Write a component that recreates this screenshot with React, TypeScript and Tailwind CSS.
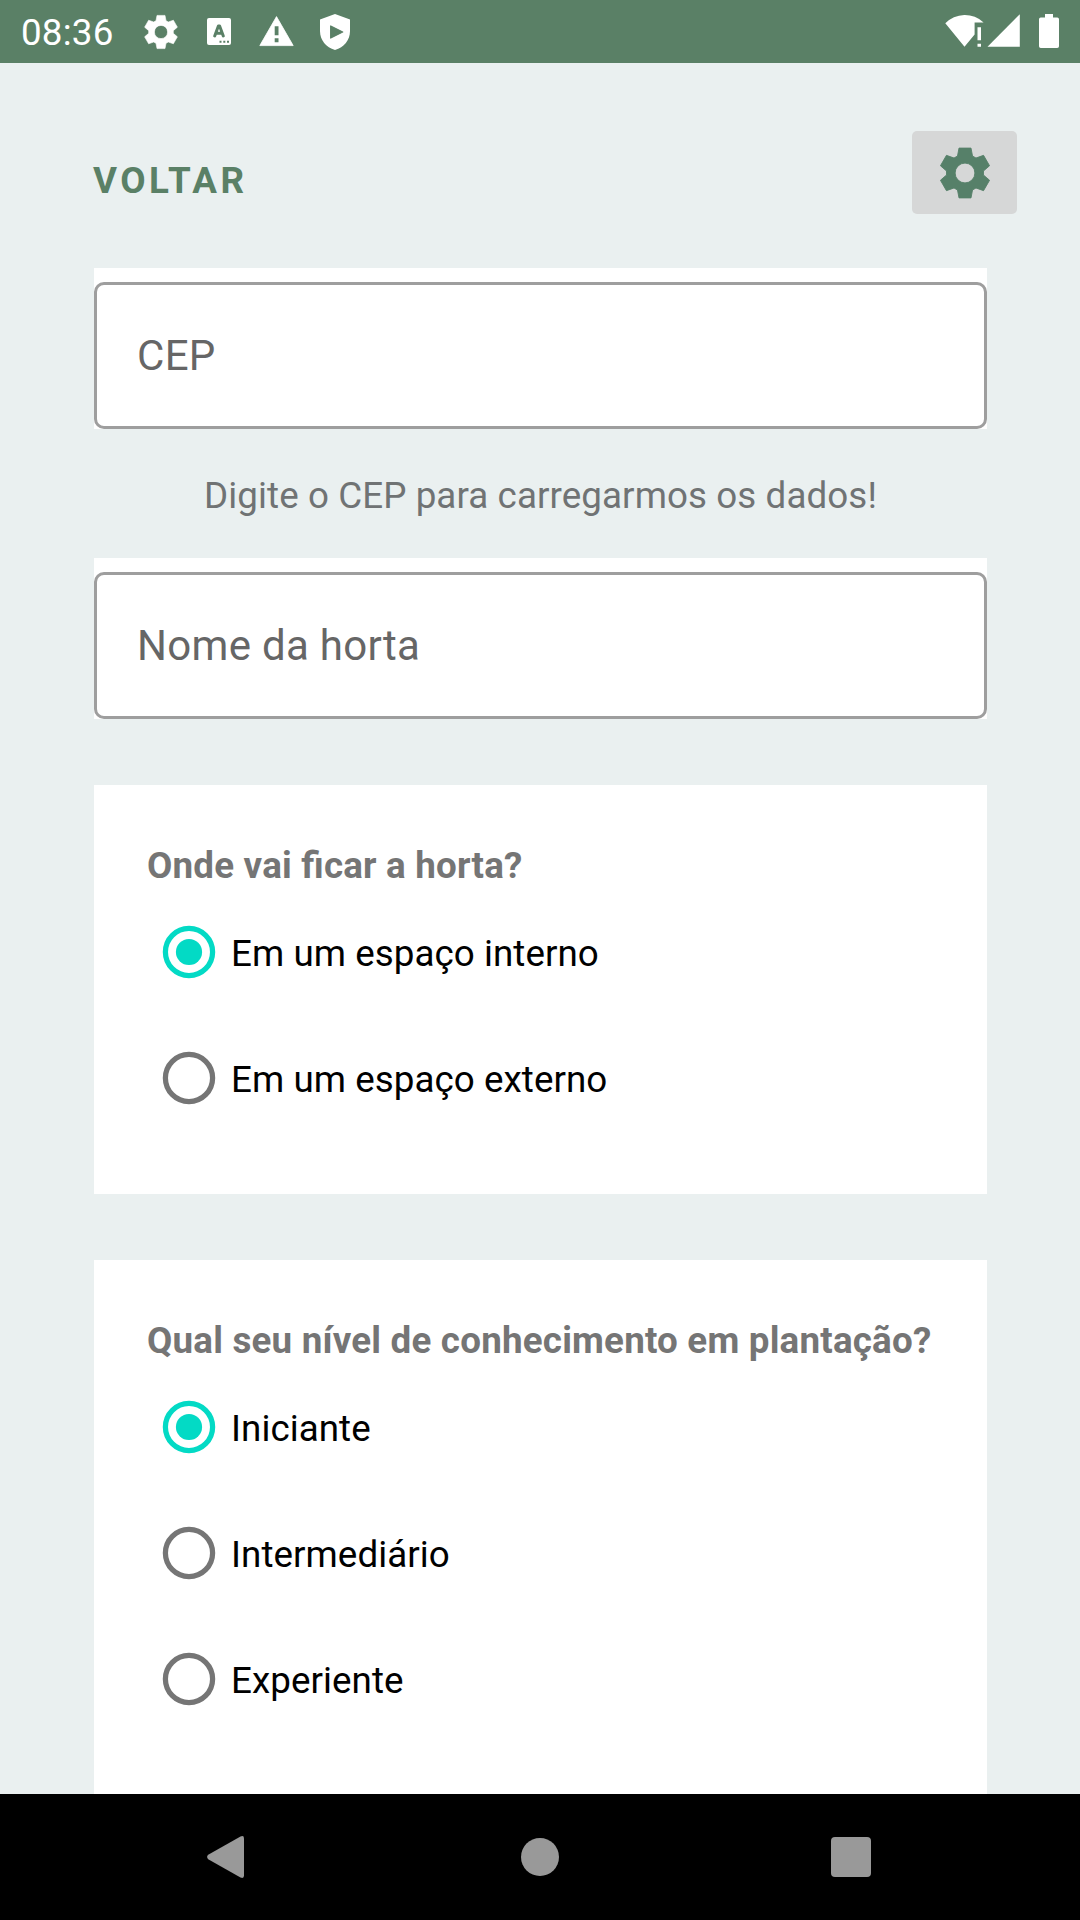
// One tooth of the six-toothed gear, centred on the origin and pointing up.
const TOOTH: [number, number][] = [
  [-7.5, -17],
  [-6, -24.9],
  [6, -24.9],
  [7.5, -17],
];

const GEAR_OUTLINE = [0, 1, 2, 3, 4, 5]
  .flatMap((k) =>
    TOOTH.map(([x, y]) => {
      const a = (k * Math.PI) / 3;
      const px = x * Math.cos(a) - y * Math.sin(a);
      const py = x * Math.sin(a) + y * Math.cos(a);
      return `${px.toFixed(2)} ${py.toFixed(2)}`;
    }),
  )
  .join("L");

const GEAR = `M${GEAR_OUTLINE}zM-9.9 0a9.9 9.9 0 1 0 19.8 0a9.9 9.9 0 1 0-19.8 0z`;

function Gear({ className }: { className: string }) {
  return (
    <svg
      className={className}
      viewBox="-30 -30 60 60"
      fill="currentColor"
      fillRule="evenodd"
      stroke="currentColor"
      strokeWidth="0.9"
      strokeLinejoin="round"
    >
      <path d={GEAR} />
    </svg>
  );
}

function StatusBar() {
  return (
    <header className="flex h-[63px] shrink-0 items-center bg-[#5a8066] pl-[21px] pr-[21px] text-white">
      <span className="w-[120px] pt-[2px] text-[36.75px] leading-[43px] tracking-[0.2px]">08:36</span>
      <Gear className="h-10 w-10 shrink-0" />
      <svg className="ml-[26px] h-[27px] w-6 shrink-0" viewBox="0 0 24 27">
        <rect width="24" height="27" rx="2" fill="currentColor" />
        <path d="M7.700 17.900 11.400 7.900h1.200l3.700 10M9 15.300h6" fill="none" stroke="#5a8066" strokeWidth="3" strokeLinecap="round" strokeLinejoin="round" />
        <path d="M12.500 22.800h2v2h-2zM16.300 22.800h2v2h-2zM20 22.800h2v2h-2z" fill="#5a8066" />
      </svg>
      <svg className="ml-7 h-[31px] w-[35px] shrink-0" viewBox="0 0 35 31">
        <path d="M17.500.6 34.200 29.600H.8z" fill="currentColor" stroke="currentColor" strokeWidth="0.8" strokeLinejoin="round" />
        <path d="M15.700 10.300h3.800v9h-3.800zM15.700 22.300h3.800v4h-3.800z" fill="#5a8066" />
      </svg>
      <svg className="ml-[26px] h-9 w-[30px] shrink-0" viewBox="0 0 30 36">
        <path d="M15 0 30 5.500V17c0 9-6 16.500-15 19C6 33.500 0 26 0 17V5.500z" fill="currentColor" />
        <path d="M10.700 12v12l12-6z" fill="#5a8066" stroke="#5a8066" strokeWidth="1.300" strokeLinejoin="round" />
      </svg>
      <div className="ml-auto flex items-center">
        <svg className="h-[35px] w-[39px]" viewBox="0 0 39 35" fill="currentColor">
          <path d="M.3 9.300A27 27 0 0 1 38.600 8.500H29.600V20.500L19.500 32.700z" />
          <path d="M32.500 13.300h3.500v13h-3.500zM32.500 29.700h3.500v3h-3.500z" />
        </svg>
        <svg className="ml-[3px] h-[35px] w-[33px]" viewBox="0 0 33 35" fill="currentColor">
          <path d="M32.800.3v32.400H.5z" />
        </svg>
        <svg className="ml-[19px] h-[35px] w-5" viewBox="0 0 20 35" fill="currentColor">
          <path d="M6 0h8v3.500h4.200q1.800 0 1.800 1.800v26.900q0 1.800-1.800 1.800H1.800Q0 34 0 32.200V5.300q0-1.800 1.800-1.800H6z" />
        </svg>
      </div>
    </header>
  );
}

function TextField({ label }: { label: string }) {
  return (
    <div className="h-[161px] bg-white pt-[14px]">
      <div className="flex h-[147px] items-center rounded-[10px] border-[3px] border-[#9e9e9e] pl-10">
        <span className="text-[42px] leading-[49px] tracking-[0.3px] text-[#666666]">{label}</span>
      </div>
    </div>
  );
}

function Radio({ label, checked = false }: { label: string; checked?: boolean }) {
  return (
    <div className="flex h-[126px] items-center pl-[15px]">
      <svg
        className={checked ? "h-[54px] w-[54px] text-[#03dac5]" : "h-[54px] w-[54px] text-[#757575]"}
        viewBox="0 0 54 54"
      >
        <circle cx="27" cy="27" r="23.6" fill="none" stroke="currentColor" strokeWidth="5.25" />
        {checked && <circle cx="27" cy="27" r="13.1" fill="currentColor" />}
      </svg>
      <span className="ml-[15px] pt-[2px] text-[36.75px] leading-[43px] tracking-[0.06px] text-black">{label}</span>
    </div>
  );
}

function Question({ title, options, className }: { title: string; options: string[]; className: string }) {
  return (
    <section className={className}>
      <h2 className="mb-[2px] h-[43px] text-[36.75px] font-bold leading-[43px] tracking-[0.2px] whitespace-nowrap text-[#757575] [font-feature-settings:'liga'_1]">
        {title}
      </h2>
      {options.map((option, i) => (
        <Radio key={option} label={option} checked={i === 0} />
      ))}
    </section>
  );
}

export default function App() {
  return (
    <div className="flex h-[1920px] w-[1080px] flex-col overflow-hidden bg-[#eaf0f0] font-[Roboto,sans-serif]">
      <StatusBar />
      <main className="flex min-h-0 flex-1 flex-col overflow-hidden pl-[94px] pr-[93px]">
        <div className="-mr-[30px] flex h-[205px] shrink-0 items-start justify-between pt-[68px]">
          <button className="-ml-px mt-7 text-[36.75px] font-bold leading-[43px] tracking-[3.4px] text-[#5a8066]">
            VOLTAR
          </button>
          <button className="flex h-[83px] w-[105px] items-center justify-center rounded-[5px] bg-[#d6d7d7] text-[#568069]">
            <Gear className="h-[60px] w-[60px]" />
          </button>
        </div>
        <TextField label="CEP" />
        <p className="flex h-[129px] shrink-0 items-center justify-center pt-[3px] text-[36.75px] leading-[43px] tracking-[0.09px] text-[#707374]">
          Digite o CEP para carregarmos os dados!
        </p>
        <TextField label="Nome da horta" />
        <Question
          className="mt-[66px] h-[409px] shrink-0 bg-white px-[53px] pt-[59px]"
          title="Onde vai ficar a horta?"
          options={["Em um espaço interno", "Em um espaço externo"]}
        />
        <Question
          className="mt-[66px] h-[534px] shrink-0 bg-white px-[53px] pt-[59px]"
          title="Qual seu nível de conhecimento em plantação?"
          options={["Iniciante", "Intermediário", "Experiente"]}
        />
      </main>
      <nav className="flex h-[126px] shrink-0 items-center bg-black text-[#999999]">
        <svg className="ml-[207px] h-[42px] w-[37px]" viewBox="0 0 37 42" fill="currentColor">
          <path d="M1.200 18.800 33.500.5Q37-1 37 2.500v37Q37 43 33.500 41.500L1.200 23.200Q-1 21 1.200 18.800z" />
        </svg>
        <div className="ml-[277px] h-[38px] w-[38px] rounded-full bg-current" />
        <div className="ml-[272px] h-10 w-10 rounded-[4px] bg-current" />
      </nav>
    </div>
  );
}
